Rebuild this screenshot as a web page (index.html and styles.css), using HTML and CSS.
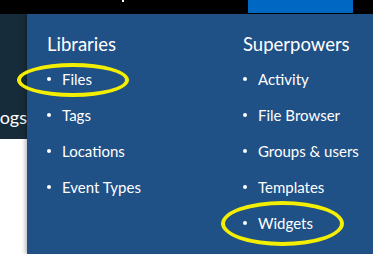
FILE: index.html
```html
<!DOCTYPE html>
<html>
<head>
<meta charset="utf-8">
<link rel="stylesheet" href="styles.css">
</head>
<body>
<div class="topbar">
  <div class="topbar-dot"></div>
  <div class="topbar-btn"></div>
</div>
<div class="main">
  <div class="side">
    <div class="side-dark"><span class="side-text">ogs</span></div>
  </div>
  <div class="panel">
    <div class="col">
      <div class="heading">Libraries</div>
      <ul class="list">
        <li class="item"><span class="mark">Files</span></li>
        <li class="item">Tags</li>
        <li class="item">Locations</li>
        <li class="item">Event Types</li>
      </ul>
    </div>
    <div class="col">
      <div class="heading">Superpowers</div>
      <ul class="list">
        <li class="item">Activity</li>
        <li class="item">File Browser</li>
        <li class="item">Groups &amp; users</li>
        <li class="item">Templates</li>
        <li class="item"><span class="mark mark2">Widgets</span></li>
      </ul>
    </div>
  </div>
</div>
</body>
</html>
```
FILE: styles.css
```css
html, body { margin: 0; padding: 0; }
body {
  width: 373px; height: 254px; overflow: hidden;
  font-family: Lato, "Open Sans", sans-serif;
  background: #fff;
}
.topbar {
  height: 14px; background: #000; display: flex; position: relative;
}
.topbar-dot {
  position: absolute; left: 122px; top: 0; width: 2px; height: 2px; background: #fff;
}
.topbar-btn {
  margin-left: 248px; width: 105px; height: 13px; background: #0068c2;
}
.main { display: flex; height: 240px; }
.side { width: 27px; flex: none; background: #fff; overflow: hidden; }
.side-dark {
  height: 125px; background: #172c3a;
  display: flex; align-items: flex-end; justify-content: flex-end;
}
.side-text {
  color: #fff; font-size: 18px; line-height: 20px; margin-bottom: 12px;
  white-space: nowrap;
}
.panel {
  flex: 1; background: #1f5086; display: flex;
  padding: 20px 0 0 20px;
  box-shadow: -2px 0 4px rgba(0,0,0,0.25);
}
.col { width: 196px; }
.heading {
  color: #fff; font-size: 18.5px; line-height: 20px;
}
.list { list-style: none; margin: 16px 0 0; padding: 0; }
.item {
  color: #fff; font-size: 15px; line-height: 18px; height: 36px;
  position: relative; padding-left: 15px;
}
.item::before {
  content: ""; position: absolute; left: 0; top: 7px; width: 4px; height: 4px;
  border-radius: 50%; background: #fff;
}
.mark { position: relative; }
.mark::after {
  content: ""; position: absolute; left: -45px; top: -7px; width: 104px; height: 26px;
  border: 4px solid #f4ee00; border-radius: 50%;
}
.mark2::after { left: -37px; top: -13px; width: 115px; height: 37px; }
```
